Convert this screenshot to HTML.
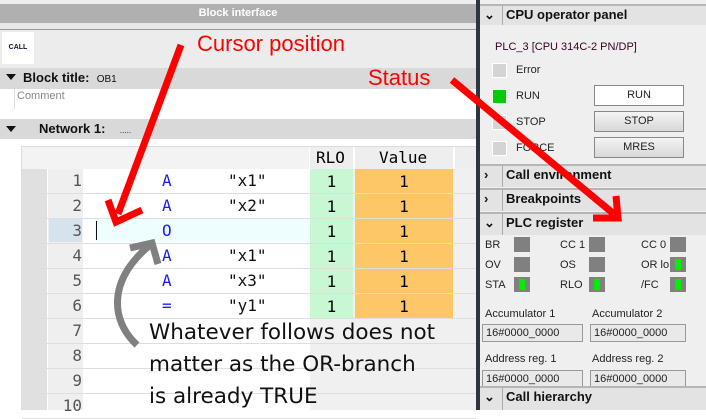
<!DOCTYPE html><html><head><style>
body{margin:0;width:706px;height:410px;overflow:hidden;background:#fff;font-family:"Liberation Sans",sans-serif;position:relative}
div{position:absolute;box-sizing:border-box}
.mono{font-family:"DejaVu Sans Mono","Liberation Mono",monospace;font-size:16px}
.bar{background:#d9d9d9;font-size:13px;color:#111}
.rp{font-size:11px;color:#222}
.led{width:15px;height:15px;background:#d4d4d4;border:1px solid #fff}
.btn{border:1px solid #888;background:linear-gradient(#f4f4f4,#d8d8d8);text-align:center;font-size:11px;line-height:18px;color:#222}
.hdr{background:#e3e3e3;border-top:2px solid #b5b5b5;font-size:13px;font-weight:bold;color:#111;line-height:18px;padding-left:26px}
.hdr span{position:absolute;left:4px;top:0;font-weight:bold}
.hdr:before{content:"";position:absolute;left:22px;top:0;bottom:0;border-left:1px solid #aaa}
.sq{width:16px;height:15px;background:#808080}
.box{border:1px solid #999;background:#e9e9e9;font-size:11px;padding-left:3px;line-height:16px;color:#222}
</style></head><body>
<div style="left:0;top:0;width:476px;height:4px;background:#eee"></div>
<div style="left:0;top:4px;width:476px;height:19px;background:#b0b0b0;color:#fff;font-size:11px;font-weight:bold;text-align:center;line-height:18px">Block interface</div>
<div style="left:0;top:23px;width:476px;height:7px;background:#e8e8e8;border-bottom:1px solid #999"></div>
<div style="left:0;top:30px;width:476px;height:38px;background:#ececec"></div>
<div style="left:2px;top:32px;width:32px;height:32px;background:#fff;font-size:7px;font-weight:bold;color:#113;line-height:32px;text-align:center">CALL</div>
<div class="bar" style="left:0;top:68px;width:476px;height:21px;line-height:20px;padding-left:23px;font-weight:bold">Block title:&nbsp;&nbsp;<span style="font-weight:normal;font-size:10px">OB1</span></div>
<div style="left:6px;top:74px;border:5px solid transparent;border-top:6px solid #111;border-bottom:0"></div>
<div style="left:14px;top:89px;width:1px;height:20px;background:#ddd"></div>
<div style="left:17px;top:90px;font-size:11px;color:#888">Comment</div>
<div class="bar" style="left:0;top:119px;width:476px;height:20px;line-height:20px;padding-left:39px;font-weight:bold">Network 1:&nbsp;&nbsp;&nbsp;&nbsp;<span style="font-weight:normal;font-size:8px">.....</span></div>
<div style="left:6px;top:126px;border:5px solid transparent;border-top:6px solid #111;border-bottom:0"></div>
<div style="left:21px;top:146px;width:455px;height:264px;background:#fff;border-top:1px solid #ddd;border-left:1px solid #ddd"></div>
<div style="left:22px;top:147px;width:287px;height:22px;background:#f3f3f3"></div>
<div style="left:310px;top:147px;width:43px;height:22px;background:#eee" class="mono"><span style="position:absolute;left:6px;top:1px">RLO</span></div>
<div style="left:355px;top:147px;width:98px;height:22px;background:#eee" class="mono"><span style="position:absolute;left:24px;top:1px">Value</span></div>
<div style="left:455px;top:147px;width:21px;height:22px;background:#eee"></div>
<div style="left:22px;top:169px;width:25px;height:241px;background:#e0e0e0"></div>
<div style="left:48px;top:169px;width:35px;height:241px;background:#efefef"></div>
<div style="left:310px;top:169px;width:166px;height:241px;background:#f0f0f0"></div>
<div style="left:49px;top:219px;width:33px;height:23px;background:#d5e3ee"></div>
<div style="left:95px;top:219px;width:214px;height:23px;background:#eefdfd"></div>
<div style="left:96px;top:221px;width:1px;height:19px;background:#111"></div>
<div id="rows"></div>
<script>
var d=[["A",'"x1"'],["A",'"x2"'],["O",""],["A",'"x1"'],["A",'"x3"'],["=",'"y1"'],[],[],[],[]],h="";
for(var i=0;i<10;i++){var y=169+i*25;
h+='<div class="mono" style="left:48px;top:'+(y+2)+'px;width:34px;text-align:right;color:#555">'+(i+1)+'</div>';
h+='<div style="left:22px;top:'+(y+24)+'px;width:454px;height:1px;background:#dedede"></div>';
if(d[i].length){h+='<div class="mono" style="left:162px;top:'+(y+2)+'px;color:#1a1aff">'+d[i][0]+'</div><div class="mono" style="left:228px;top:'+(y+2)+'px;color:#111">'+d[i][1]+'</div>';
h+='<div class="mono" style="left:310px;top:'+y+'px;width:43px;height:24px;background:#c8f7d4;text-align:center;line-height:25px">1</div>';
h+='<div class="mono" style="left:355px;top:'+y+'px;width:98px;height:24px;background:#fdc667;text-align:center;line-height:25px">1</div>';}}
document.getElementById("rows").innerHTML=h;
</script>
<div style="left:149px;top:317px;font-family:'DejaVu Sans',sans-serif;font-size:21.5px;line-height:32px;color:#111;white-space:nowrap">Whatever follows does not<br>matter as the OR-branch<br>is already TRUE</div>
<div style="left:197px;top:31px;font-size:22px;color:#f00">Cursor position</div>
<div style="left:368px;top:65px;font-size:22px;color:#f00">Status</div>
<div style="left:476px;top:0;width:4px;height:410px;background:#2c3540"></div>
<div style="left:480px;top:0;width:226px;height:410px;background:#efefef"></div>
<div class="hdr" style="left:480px;top:4px;width:226px;height:21px">CPU operator panel<span>⌄</span></div>
<div class="rp" style="left:495px;top:41px;color:#302">PLC_3 [CPU 314C-2 PN/DP]</div>
<div class="led" style="left:492px;top:63px"></div><div class="rp" style="left:516px;top:64px">Error</div>
<div class="led" style="left:492px;top:89px;background:#0c0"></div><div class="rp" style="left:516px;top:90px">RUN</div>
<div class="led" style="left:492px;top:115px"></div><div class="rp" style="left:516px;top:116px">STOP</div>
<div class="led" style="left:492px;top:141px"></div><div class="rp" style="left:516px;top:142px">FORCE</div>
<div class="btn" style="left:594px;top:85px;width:90px;height:21px;background:#fff;line-height:19px">RUN</div>
<div class="btn" style="left:594px;top:111px;width:90px;height:21px;line-height:19px">STOP</div>
<div class="btn" style="left:594px;top:137px;width:90px;height:21px;line-height:19px">MRES</div>
<div class="hdr" style="left:480px;top:164px;width:226px;height:23px">Call environment<span>›</span></div>
<div class="hdr" style="left:480px;top:188px;width:226px;height:23px">Breakpoints<span>›</span></div>
<div class="hdr" style="left:480px;top:212px;width:226px;height:23px">PLC register<span>⌄</span></div>
<div class="rp" style="left:485px;top:239px">BR</div><div class="sq" style="left:514px;top:237px"></div>
<div class="rp" style="left:560px;top:239px">CC 1</div><div class="sq" style="left:589px;top:237px"></div>
<div class="rp" style="left:641px;top:239px">CC 0</div><div class="sq" style="left:670px;top:237px"></div>
<div class="rp" style="left:485px;top:259px">OV</div><div class="sq" style="left:514px;top:257px"></div>
<div class="rp" style="left:560px;top:259px">OS</div><div class="sq" style="left:589px;top:257px"></div>
<div class="rp" style="left:641px;top:259px">OR lo</div><div class="sq" style="left:670px;top:257px"><div style="left:5px;top:2px;width:6px;height:11px;background:#0e0"></div></div>
<div class="rp" style="left:485px;top:279px">STA</div><div class="sq" style="left:514px;top:277px"><div style="left:5px;top:2px;width:6px;height:11px;background:#0e0"></div></div>
<div class="rp" style="left:560px;top:279px">RLO</div><div class="sq" style="left:589px;top:277px"><div style="left:5px;top:2px;width:6px;height:11px;background:#0e0"></div></div>
<div class="rp" style="left:641px;top:279px">/FC</div><div class="sq" style="left:670px;top:277px"><div style="left:5px;top:2px;width:6px;height:11px;background:#0e0"></div></div>
<div class="rp" style="left:485px;top:308px">Accumulator 1</div><div class="rp" style="left:592px;top:308px">Accumulator 2</div>
<div class="box" style="left:482px;top:324px;width:101px;height:18px">16#0000_0000</div>
<div class="box" style="left:590px;top:324px;width:96px;height:18px">16#0000_0000</div>
<div class="rp" style="left:485px;top:353px">Address reg. 1</div><div class="rp" style="left:592px;top:353px">Address reg. 2</div>
<div class="box" style="left:482px;top:370px;width:101px;height:18px">16#0000_0000</div>
<div class="box" style="left:590px;top:370px;width:96px;height:18px">16#0000_0000</div>
<div class="hdr" style="left:480px;top:386px;width:226px;height:24px">Call hierarchy<span>⌄</span></div>
<svg style="position:absolute;left:0;top:0" width="706" height="410">
<g stroke="#f00" stroke-width="7" fill="none">
<line x1="181" y1="45" x2="118" y2="214"/>
<polyline points="108,200 116,222 142,210"/>
<line x1="452" y1="80" x2="614" y2="214"/>
<polyline points="593,218 618,218 616,196"/>
</g>
<g stroke="#808080" stroke-width="7" fill="none">
<path d="M137,345 C110,320 108,280 150,245"/>
<polyline points="130,248 152,243 158,264"/>
</g>
</svg>
</body></html>
